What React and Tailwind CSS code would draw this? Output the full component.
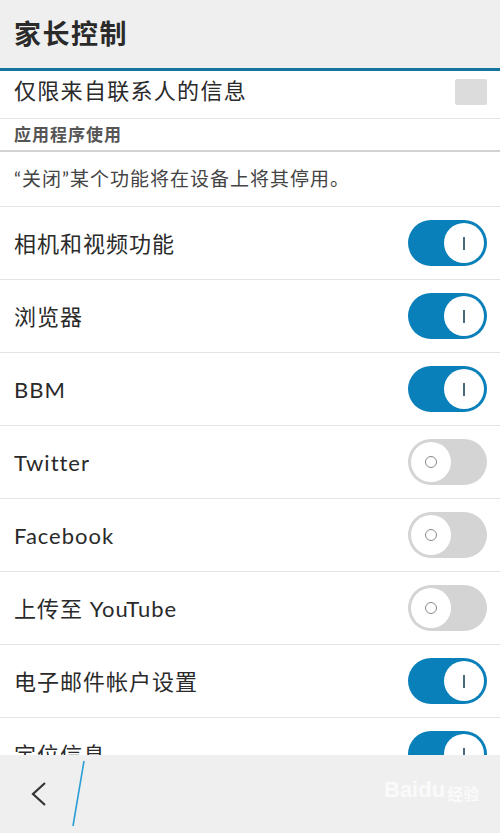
import React from "react";

const font = { fontFamily: "Lato, 'Noto Sans CJK SC', sans-serif" };

function Toggle({ on }) {
  if (on) {
    return (
      <div className="w-[79px] h-[46px] rounded-full bg-[#0a80ba] flex items-center justify-end pr-[3px] shrink-0">
        <div className="w-[40px] h-[40px] rounded-full bg-white flex items-center justify-center">
          <div className="w-[2px] h-[13px] bg-[#4a6a7a]" />
        </div>
      </div>
    );
  }
  return (
    <div className="w-[79px] h-[46px] rounded-full bg-[#d4d4d4] flex items-center justify-start pl-[3px] shrink-0">
      <div className="w-[40px] h-[40px] rounded-full bg-white flex items-center justify-center">
        <div className="w-[12px] h-[12px] rounded-full border-[1.5px] border-[#8a8a8a]" />
      </div>
    </div>
  );
}

const rows = [
  ["相机和视频功能", true],
  ["浏览器", true],
  ["BBM", true],
  ["Twitter", false],
  ["Facebook", false],
  ["上传至 YouTube", false],
  ["电子邮件帐户设置", true],
  ["定位信息", true],
];

export default function App() {
  return (
    <div className="w-[500px] h-[833px] flex flex-col bg-white overflow-hidden" style={font}>
      <div className="h-[68px] bg-[#efefef] flex items-center px-[14px] shrink-0">
        <span className="text-[27px] font-bold text-[#2a2a2a] tracking-[1.5px]">家长控制</span>
      </div>
      <div className="h-[3px] bg-[#14739f] shrink-0" />
      <div className="flex-1 overflow-hidden flex flex-col">
        <div className="h-[48px] flex items-center justify-between pl-[14px] pr-[13px] border-b border-[#e4e4e4] shrink-0">
          <span className="text-[22px] text-[#2a2a2a] tracking-[1.3px] -mt-[8px]">仅限来自联系人的信息</span>
          <div className="w-[32px] h-[26px] bg-[#dcdcdc] rounded-[2px] -mt-[6px]" />
        </div>
        <div className="h-[33px] flex items-center px-[14px] border-b-2 border-[#d2d2d2] shrink-0">
          <span className="text-[17px] font-bold text-[#555] tracking-[1px]">应用程序使用</span>
        </div>
        <div className="h-[55px] flex items-center px-[14px] border-b border-[#e4e4e4] shrink-0">
          <span className="text-[19px] text-[#444] tracking-[1px]">“关闭”某个功能将在设备上将其停用。</span>
        </div>
        {rows.map(([label, on]) => (
          <div key={label} className="h-[73px] flex items-center justify-between pl-[14px] pr-[13px] border-b border-[#e4e4e4] shrink-0">
            <span className="text-[22px] text-[#2a2a2a] tracking-[1px]">{label}</span>
            <Toggle on={on} />
          </div>
        ))}
      </div>
      <div className="h-[78px] bg-[#efefef] shrink-0 flex items-center relative">
        <svg width="500" height="78" viewBox="0 0 500 78" className="block">
          <polyline points="45,28 33,39 45,50" fill="none" stroke="#333" strokeWidth="2.2" />
          <line x1="84" y1="6" x2="73" y2="71" stroke="#2a9fd6" strokeWidth="1.6" />
        </svg>
        <div className="absolute left-[384px] top-[24px] flex items-end gap-[2px] text-white/70">
          <span className="text-[22px] font-bold leading-none" style={{ fontFamily: "'Liberation Sans', sans-serif" }}>Baidu</span>
          <span className="text-[16px] font-bold leading-none" style={{ fontFamily: "'Noto Sans CJK SC', sans-serif" }}>经验</span>
        </div>
      </div>
    </div>
  );
}
